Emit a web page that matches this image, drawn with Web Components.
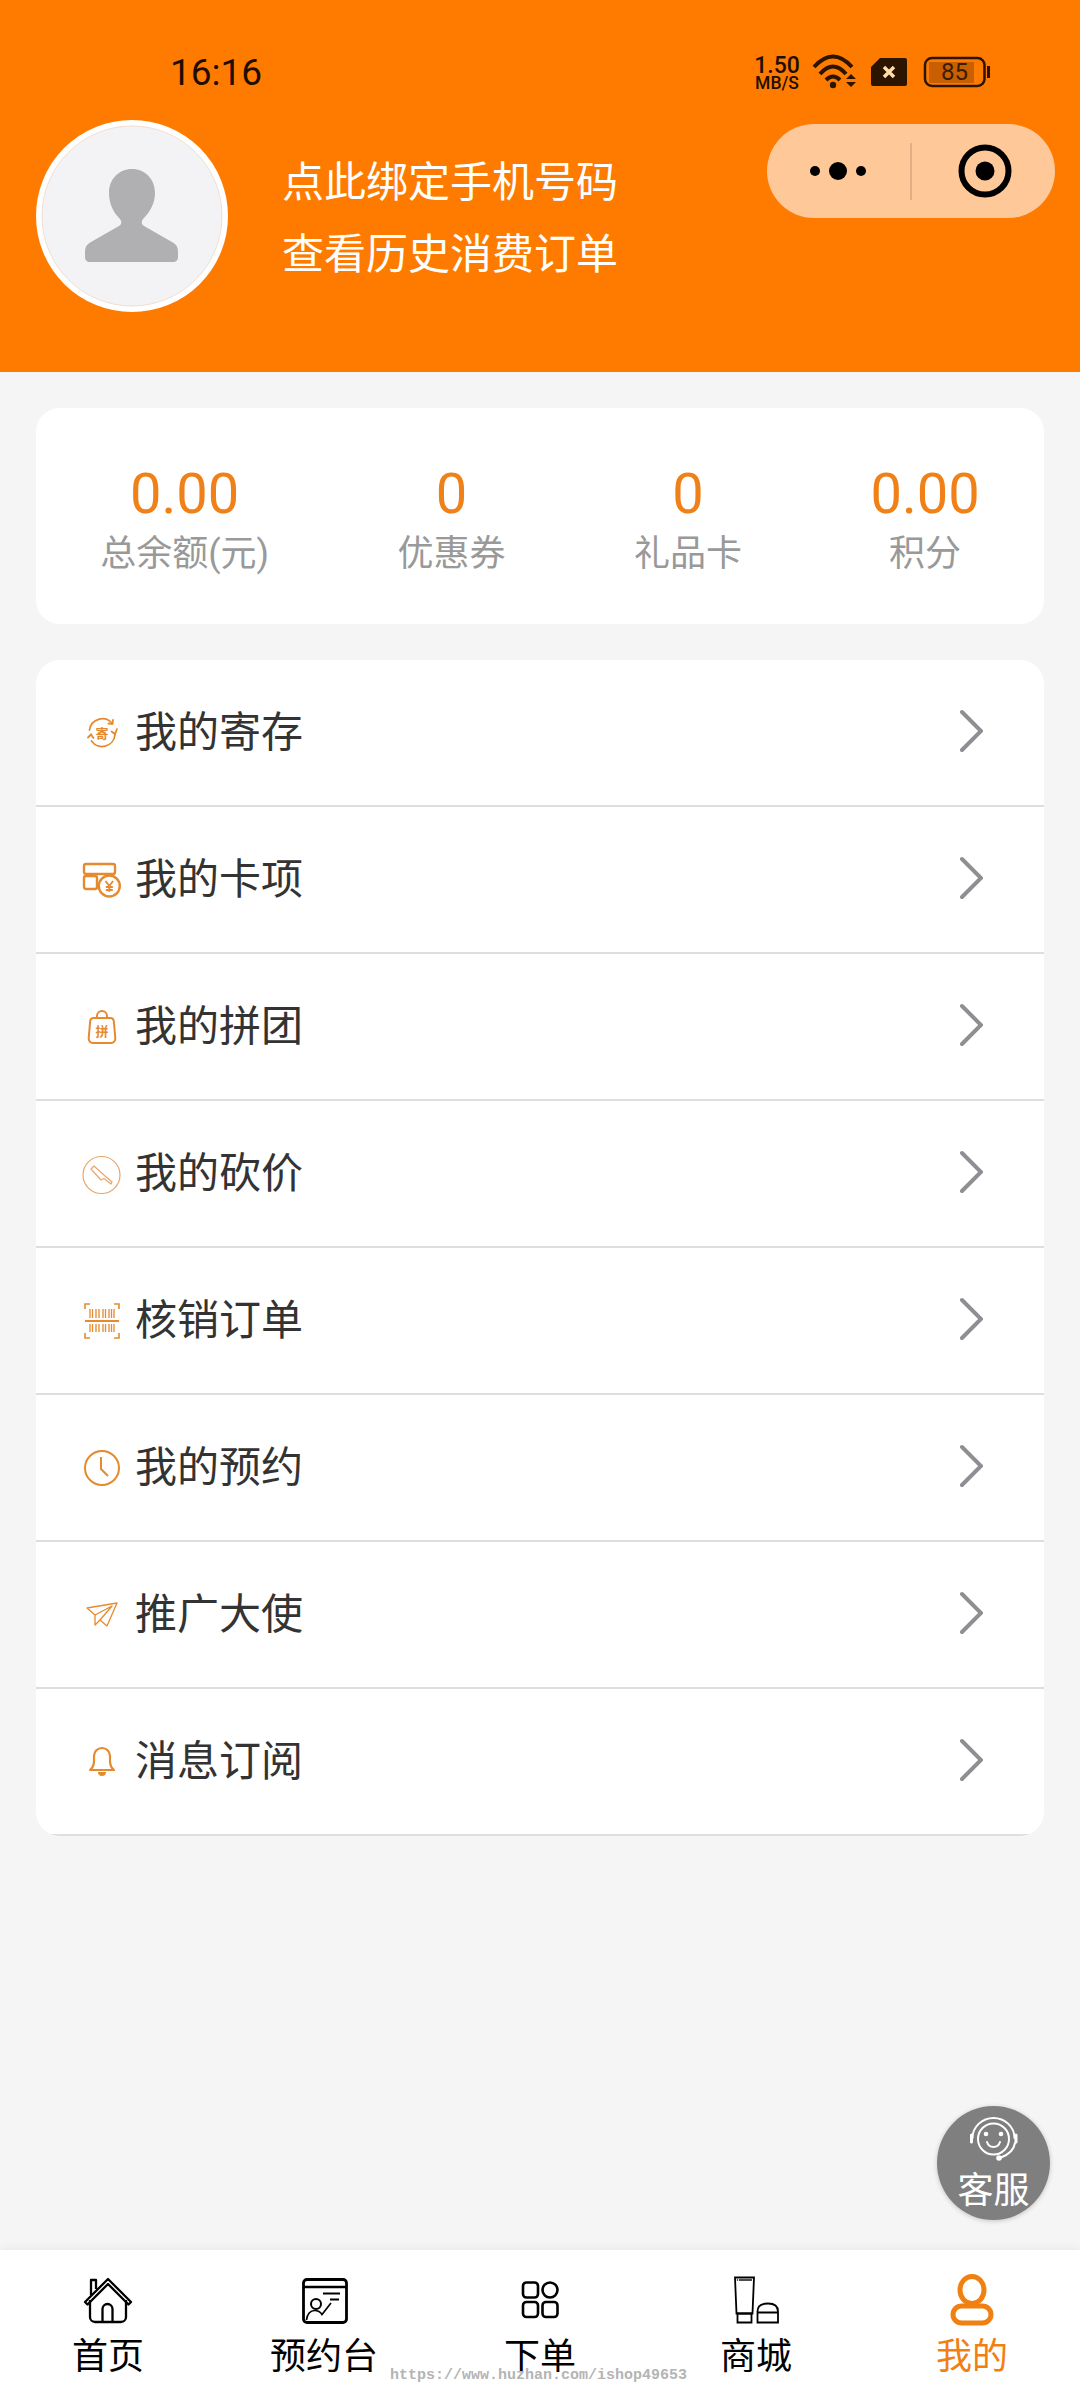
<!DOCTYPE html>
<html lang="zh">
<head>
<meta charset="utf-8">
<title>我的</title>
<style>
    html, body { margin: 0; padding: 0; }
    body {
        position: relative;
        display: flex;
        flex-direction: column;
        width: 1080px;
        height: 2400px;
        overflow: hidden;
        background: #f5f5f5;
        font-family: Roboto, "Noto Sans CJK SC", sans-serif;
    }
</style>
</head>
<body>
<app-header>
    <status-bar slot="status" time="16:16" speed="1.50" unit="MB/S" battery="85"></status-bar>
    <mini-capsule slot="capsule"></mini-capsule>
    <svg slot="avatar" width="192" height="192" viewBox="36 120 192 192">
        <circle cx="132" cy="216" r="93" fill="#f3f3f6" stroke="#fff" stroke-width="6"/>
        <circle cx="132" cy="216" r="90" fill="none" stroke="#f1dfd0" stroke-width="1"/>
        <path fill="#b0b0b2" d="M132 169c-13 0-23 10-23 24 0 10 4 19 10 25 3 3 3 6 0 8l-28 16c-4 2-6 5-6 9v6c0 3 2 5 5 5h83c3 0 5-2 5-5v-6c0-4-2-7-6-9l-28-16c-3-2-3-5 0-8 6-6 11-15 11-25 0-14-10-24-23-24z"/>
    </svg>
    <span>点此绑定手机号码</span>
    <span>查看历史消费订单</span>
</app-header>

<stats-card>
    <stat-item value="0.00">总余额(元)</stat-item>
    <stat-item value="0">优惠券</stat-item>
    <stat-item value="0">礼品卡</stat-item>
    <stat-item value="0.00">积分</stat-item>
</stats-card>

<menu-card>
    <menu-row>
        <svg slot="icon" width="46" height="46" viewBox="0 0 46 46" fill="none" stroke="#e58a2e" stroke-width="1.800" stroke-linecap="round">
            <path d="M10.500 20a13 13 0 0 1 22.500-7"/>
            <path d="M36 25a13 13 0 0 1-23.500 6"/>
            <path d="M29.500 13.500l4 .5 .5-4M38 19l-2 5-3.500-2.500M9 27.500l3-3 2.500 3.500"/>
            <text x="23" y="27.500" font-size="13" font-weight="700" text-anchor="middle" fill="#e58a2e" stroke="none" font-family="Noto Sans CJK SC, sans-serif">寄</text>
        </svg>
        我的寄存
    </menu-row>
    <menu-row>
        <svg slot="icon" width="46" height="46" viewBox="0 0 46 46" fill="none" stroke="#e58a2e" stroke-width="2.400">
            <rect x="5" y="7" width="31" height="10" rx="2"/>
            <rect x="5" y="19" width="13" height="13" rx="2"/>
            <circle cx="30.300" cy="29" r="10.500" fill="#fff"/>
            <path d="M26.500 24l3.800 5 3.800-5M30.300 29v6M26.800 30h7M26.800 33h7" stroke-width="1.800"/>
        </svg>
        我的卡项
    </menu-row>
    <menu-row>
        <svg slot="icon" width="46" height="46" viewBox="0 0 46 46" fill="none" stroke="#e58a2e" stroke-width="2">
            <path d="M14.500 14h17c2 0 3 1 3.300 3l1.500 17c.2 3-1.500 5-4.300 5H14c-2.800 0-4.500-2-4.300-5L11.200 17c.3-2 1.300-3 3.300-3z"/>
            <path d="M18 14v-2a5 5 0 0 1 10 0v2"/>
            <text x="23" y="32" font-size="13" font-weight="700" text-anchor="middle" fill="#e58a2e" stroke="none" font-family="Noto Sans CJK SC, sans-serif">拼</text>
        </svg>
        我的拼团
    </menu-row>
    <menu-row>
        <svg slot="icon" width="46" height="46" viewBox="0 0 46 46" fill="none" stroke="#e7a66a" stroke-width="1.200">
            <circle cx="22.500" cy="24" r="18.500"/>
            <path d="M12 18l3-3 11 10 7 6-1 2-7-5.500-3 1.500z" stroke-linejoin="round"/>
        </svg>
        我的砍价
    </menu-row>
    <menu-row>
        <svg slot="icon" width="46" height="46" viewBox="0 0 46 46" fill="none" stroke="#e58a2e" stroke-width="1.600">
            <path d="M11 6H6v5M35 6h5v5M11 40H6v-5M35 40h5v-5"/>
            <path d="M6 23h34" stroke-width="1.800"/>
            <path d="M11 11v9M13.500 11v9M17 11v9M20 11v9M24 11v9M26.500 11v9M30 11v9M32.500 11v9M35 11v9M11 26v8M13.500 26v8M17 26v8M20 26v8M24 26v8M26.500 26v8M30 26v8M32.500 26v8M35 26v8" stroke-width="1.300"/>
        </svg>
        核销订单
    </menu-row>
    <menu-row>
        <svg slot="icon" width="46" height="46" viewBox="0 0 46 46" fill="none" stroke="#e58a2e" stroke-width="2">
            <circle cx="23" cy="23" r="17"/>
            <path d="M22 12v12l7 7"/>
        </svg>
        我的预约
    </menu-row>
    <menu-row>
        <svg slot="icon" width="46" height="46" viewBox="0 0 46 46" fill="none" stroke="#e58a2e" stroke-width="1.300" stroke-linejoin="round">
            <path d="M8 16L38 11 28 34 21 28 16 33 16 23z"/>
            <path d="M16 23L33 14 21 28"/>
        </svg>
        推广大使
    </menu-row>
    <menu-row>
        <svg slot="icon" width="46" height="46" viewBox="0 0 46 46" fill="none" stroke="#e58a2e" stroke-width="2.200" stroke-linejoin="round">
            <path d="M11 31c2.500-2 4-4 4-9v-5a8 8 0 0 1 16 0v5c0 5 1.500 7 4 9z"/>
            <path d="M19 33h8c0 2.500-1.500 4-4 4s-4-1.500-4-4z" fill="#e58a2e" stroke="none"/>
        </svg>
        消息订阅
    </menu-row>
</menu-card>

<div style="flex:1"></div>

<kefu-button>
    <svg slot="icon" width="54" height="46" viewBox="966 2116 54 46" fill="none" stroke="#fff" stroke-width="2" stroke-linecap="round">
        <circle cx="992.500" cy="2139" r="15.500"/>
        <path d="M971.500 2138a21 20 0 0 1 42 0"/>
        <path d="M1014 2143c-1 7-7 12-15 15"/>
        <circle cx="998" cy="2158" r="1.800" fill="#fff"/>
        <path d="M970.500 2135v7M1015 2135v7" stroke-width="3"/>
        <circle cx="985" cy="2134" r="2.300" fill="#fff" stroke="none"/>
        <circle cx="1000" cy="2134" r="2.300" fill="#fff" stroke="none"/>
        <path d="M986 2142c2 6.500 11 6.500 13 0"/>
    </svg>
    客服
</kefu-button>

<tab-bar>
    <tab-item>
        <svg slot="icon" width="60" height="52" viewBox="78 2274 60 52" fill="none" stroke="#000" stroke-width="2.300" stroke-linejoin="round">
            <path d="M85 2302l23-23 23 23-2.500 2.500-20.500-20.500-20.500 20.500z"/>
            <path d="M91 2295v-15h5v9"/>
            <path d="M90 2300v17a5 5 0 0 0 5 5h26a5 5 0 0 0 5-5v-17"/>
            <path d="M102.500 2322v-13a5 5 0 0 1 10 0v13"/>
        </svg>
        首页
    </tab-item>
    <tab-item>
        <svg slot="icon" width="60" height="52" viewBox="294 2274 60 52" fill="none" stroke="#000">
            <rect x="303.500" y="2279.500" width="43" height="43" rx="3.500" stroke-width="2.800"/>
            <path d="M303.500 2287h43" stroke-width="2.400"/>
            <path d="M323 2293.500h17M330 2299.500h9" stroke-width="2"/>
            <circle cx="316" cy="2304" r="5" stroke-width="2"/>
            <path d="M306.500 2320c.5-6 4-9.500 8-9.500 3 0 6 1.500 7.500 4l9-11.500" stroke-width="1.700"/>
        </svg>
        预约台
    </tab-item>
    <tab-item>
        <svg slot="icon" width="60" height="52" viewBox="510 2274 60 52" fill="none" stroke="#000" stroke-width="2.600">
            <rect x="523" y="2282.500" width="15" height="15" rx="3.500"/>
            <circle cx="550" cy="2290" r="7.500"/>
            <rect x="523" y="2302" width="15" height="15" rx="3.500"/>
            <rect x="542.500" y="2302" width="15" height="15" rx="3.500"/>
        </svg>
        下单
    </tab-item>
    <tab-item>
        <svg slot="icon" width="60" height="52" viewBox="726 2274 60 52" fill="none" stroke="#000" stroke-width="1.800">
            <path d="M735 2277.500h19l-1.500 36h-16z"/>
            <path d="M737.500 2313.500h14v9h-14z"/>
            <path d="M739 2280h13" stroke-width="1.400"/>
            <circle cx="737.500" cy="2280" r=".8" fill="#000" stroke="none"/>
            <path d="M757.500 2311.500c0-5.500 4-8 10.500-8s10 2.500 10 8v11h-20.500zM757.500 2312.500h20.500"/>
        </svg>
        商城
    </tab-item>
    <tab-item active>
        <svg slot="icon" width="60" height="52" viewBox="942 2274 60 52" fill="none" stroke="#f08012" stroke-width="5">
            <ellipse cx="972" cy="2290" rx="12" ry="13.500"/>
            <rect x="953" y="2306" width="38" height="17" rx="8.500"/>
        </svg>
        我的
    </tab-item>
</tab-bar>

<wm-text>https://www.huzhan.com/ishop49653</wm-text>

<script>
class StatusBar extends HTMLElement {
    constructor() {
        super();
        this.attachShadow({ mode: 'open' });
    }

    connectedCallback() {
        const time = this.getAttribute('time');
        const speed = this.getAttribute('speed');
        const unit = this.getAttribute('unit');
        const battery = this.getAttribute('battery');
        this.shadowRoot.innerHTML = `
            <style>
                :host {
                    display: flex;
                    align-items: center;
                    box-sizing: border-box;
                    height: 120px;
                    padding: 44px 89px 20px 170px;
                    color: #1d0e00;
                }
                .time { font-size: 37px; font-weight: 400; line-height: 56px; margin-top: 2px; margin-right: auto; }
                .speed { display: flex; flex-direction: column; align-items: center; width: 48px; font-weight: 500; }
                .speed b { font-size: 23px; line-height: 21px; font-weight: 500; }
                .speed i { font-size: 17.500px; line-height: 14px; font-style: normal; }
                svg { display: block; }
                .wifi { margin-left: 11px; }
                .sim { margin-left: 13px; }
                .battery {
                    position: relative;
                    display: flex;
                    align-items: center;
                    justify-content: center;
                    width: 68px;
                    height: 32px;
                    margin-left: 16px;
                }
                .battery svg { position: absolute; inset: 0; }
                .battery span { position: relative; font-size: 24px; line-height: 32px; margin-right: 5px; color: #3a1c00; }
            </style>
            <span class="time">${time}</span>
            <div class="speed"><b>${speed}</b><i>${unit}</i></div>
            <svg class="wifi" width="46" height="36" viewBox="813 54 46 36" fill="none" stroke="#2b1400" stroke-width="4">
                <path d="M815 67Q834 46 853 67M821 74Q834 59 847 74M827 80Q834 73 841 80"/>
                <circle cx="834" cy="85" r="3.200" fill="#2b1400" stroke="none"/>
                <path d="M847 79l5-5 5 5zM847 82h10l-5 5z" fill="#2b1400" stroke="none"/>
            </svg>
            <svg class="sim" width="36" height="28" viewBox="871 57 36 28">
                <path d="M880 57h25a2 2 0 0 1 2 2v24a2 2 0 0 1-2 2h-32a2 2 0 0 1-2-2V66z" fill="#2b1400"/>
                <path d="M884 66l10 10M894 66l-10 10" stroke="#ffdca8" stroke-width="3.500"/>
            </svg>
            <div class="battery">
                <svg width="68" height="32" viewBox="924 56 68 32" fill="none">
                    <rect x="930" y="62" width="45" height="21" fill="#c85f00"/>
                    <rect x="926" y="58" width="59.500" height="28" rx="7" stroke="#2b1400" stroke-width="2.500"/>
                    <path d="M989.500 66v12" stroke="#2b1400" stroke-width="3"/>
                </svg>
                <span>${battery}</span>
            </div>
        `;
    }
}

class MiniCapsule extends HTMLElement {
    constructor() {
        super();
        this.attachShadow({ mode: 'open' });
    }

    connectedCallback() {
        this.shadowRoot.innerHTML = `
            <style>
                :host {
                    position: absolute;
                    left: 767px;
                    top: 124px;
                    display: block;
                    width: 288px;
                    height: 94px;
                    border-radius: 47px;
                    background: #ffc899;
                }
                svg { display: block; }
            </style>
            <svg width="288" height="94" viewBox="767 124 288 94">
                <circle cx="815" cy="171" r="5"/>
                <circle cx="838" cy="171" r="9"/>
                <circle cx="861" cy="171" r="5"/>
                <path d="M911 143v57" stroke="#d9a67e" stroke-width="1.500"/>
                <circle cx="985" cy="171" r="23.500" fill="none" stroke="#000" stroke-width="6"/>
                <circle cx="985" cy="171" r="9.500"/>
            </svg>
        `;
    }
}

class AppHeader extends HTMLElement {
    constructor() {
        super();
        this.attachShadow({ mode: 'open' });
    }

    connectedCallback() {
        this.shadowRoot.innerHTML = `
            <style>
                :host {
                    position: relative;
                    display: block;
                    box-sizing: border-box;
                    flex: none;
                    height: 372px;
                    background: #ff7b00;
                }
                .profile {
                    display: flex;
                    align-items: center;
                    gap: 54px;
                    padding-left: 36px;
                }
                .lines {
                    display: flex;
                    flex-direction: column;
                    color: #fff;
                    font-size: 42px;
                    line-height: 72px;
                    margin-top: 5px;
                }
                ::slotted(span) { display: block; }
                ::slotted(svg) { display: block; flex: none; }
            </style>
            <slot name="status"></slot>
            <slot name="capsule"></slot>
            <div class="profile">
                <slot name="avatar"></slot>
                <div class="lines"><slot></slot></div>
            </div>
        `;
    }
}

class StatsCard extends HTMLElement {
    constructor() {
        super();
        this.attachShadow({ mode: 'open' });
        this.shadowRoot.innerHTML = `
            <style>
                :host {
                    display: flex;
                    justify-content: space-around;
                    flex: none;
                    box-sizing: border-box;
                    height: 216px;
                    margin: 36px 36px 0;
                    padding-top: 56px;
                    border-radius: 24px;
                    background: #fff;
                }
            </style>
            <slot></slot>
        `;
    }
}

class StatItem extends HTMLElement {
    constructor() {
        super();
        this.attachShadow({ mode: 'open' });
    }

    connectedCallback() {
        this.shadowRoot.innerHTML = `
            <style>
                :host { display: flex; flex-direction: column; align-items: center; }
                .value { color: #f08018; font-size: 56px; line-height: 60px; }
                .label { color: #999; font-size: 36px; line-height: 50px; margin-top: 5px; }
            </style>
            <div class="value">${this.getAttribute('value')}</div>
            <div class="label"><slot></slot></div>
        `;
    }
}

class MenuCard extends HTMLElement {
    constructor() {
        super();
        this.attachShadow({ mode: 'open' });
        this.shadowRoot.innerHTML = `
            <style>
                :host {
                    display: block;
                    flex: none;
                    margin: 36px 36px 0;
                    border-radius: 24px;
                    overflow: hidden;
                    background: #fff;
                }
            </style>
            <slot></slot>
        `;
    }
}

class MenuRow extends HTMLElement {
    constructor() {
        super();
        this.attachShadow({ mode: 'open' });
        this.shadowRoot.innerHTML = `
            <style>
                :host {
                    display: flex;
                    align-items: center;
                    box-sizing: border-box;
                    height: 147px;
                    padding: 0 61px 0 43px;
                    border-bottom: 2px solid #dedede;
                    color: #333;
                    font-size: 42px;
                }
                .icon { display: flex; width: 46px; height: 46px; margin-right: 10px; }
                .label { flex: 1; line-height: 60px; padding-top: 1px; }
                svg { display: block; }
                .chevron { margin-top: -3px; }
            </style>
            <div class="icon"><slot name="icon"></slot></div>
            <div class="label"><slot></slot></div>
            <svg class="chevron" width="24" height="44" viewBox="0 0 24 44" fill="none" stroke="#8e8e93" stroke-width="4" stroke-linecap="round">
                <path d="M3 3l19 19L3 41"/>
            </svg>
        `;
    }
}

class KefuButton extends HTMLElement {
    constructor() {
        super();
        this.attachShadow({ mode: 'open' });
        this.shadowRoot.innerHTML = `
            <style>
                :host {
                    position: absolute;
                    left: 937px;
                    top: 2106px;
                    display: flex;
                    flex-direction: column;
                    align-items: center;
                    box-sizing: border-box;
                    width: 113px;
                    height: 114px;
                    padding-top: 10px;
                    border-radius: 50%;
                    background: #7f7f7f;
                    box-shadow: 0 1px 5px rgba(0,0,0,.2);
                    color: #fff;
                    font-size: 36px;
                }
                .icon { display: flex; height: 46px; }
                .label { line-height: 44px; margin-top: 7px; }
            </style>
            <div class="icon"><slot name="icon"></slot></div>
            <div class="label"><slot></slot></div>
        `;
    }
}

class TabBar extends HTMLElement {
    constructor() {
        super();
        this.attachShadow({ mode: 'open' });
        this.shadowRoot.innerHTML = `
            <style>
                :host {
                    display: flex;
                    flex: none;
                    height: 150px;
                    background: #fff;
                    box-shadow: 0 -2px 8px rgba(0,0,0,.05);
                }
            </style>
            <slot></slot>
        `;
    }
}

class TabItem extends HTMLElement {
    constructor() {
        super();
        this.attachShadow({ mode: 'open' });
    }

    connectedCallback() {
        const color = this.hasAttribute('active') ? '#f08012' : '#000';
        this.shadowRoot.innerHTML = `
            <style>
                :host {
                    display: flex;
                    flex-direction: column;
                    align-items: center;
                    flex: 1;
                    padding-top: 24px;
                    color: ${color};
                    font-size: 36px;
                }
                .icon { display: flex; height: 52px; }
                .label { line-height: 40px; margin-top: 11px; }
            </style>
            <div class="icon"><slot name="icon"></slot></div>
            <div class="label"><slot></slot></div>
        `;
    }
}

class WmText extends HTMLElement {
    constructor() {
        super();
        this.attachShadow({ mode: 'open' });
        this.shadowRoot.innerHTML = `
            <style>
                :host {
                    position: absolute;
                    left: 390px;
                    top: 2367px;
                    display: block;
                    color: #b4b4b4;
                    font-family: "Liberation Mono", monospace;
                    font-size: 15px;
                    font-weight: 700;
                    line-height: 18px;
                    white-space: nowrap;
                }
            </style>
            <slot></slot>
        `;
    }
}

customElements.define('status-bar', StatusBar);
customElements.define('mini-capsule', MiniCapsule);
customElements.define('app-header', AppHeader);
customElements.define('stats-card', StatsCard);
customElements.define('stat-item', StatItem);
customElements.define('menu-card', MenuCard);
customElements.define('menu-row', MenuRow);
customElements.define('kefu-button', KefuButton);
customElements.define('tab-bar', TabBar);
customElements.define('tab-item', TabItem);
customElements.define('wm-text', WmText);
</script>
</body>
</html>
